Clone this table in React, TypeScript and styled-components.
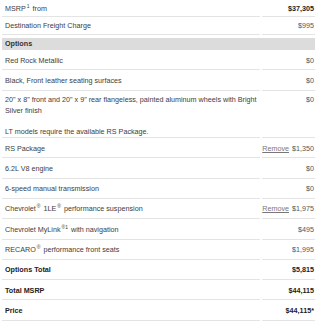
import React from "react";
import styled, { createGlobalStyle } from "styled-components";

const Global = createGlobalStyle`
  html, body { margin: 0; padding: 0; background: #fff; }
  body { font-family: "Liberation Sans", Arial, sans-serif; }
`;

const Table = styled.div`
  width: 313px;
  margin-left: 2px;
  font-size: 7.2px;
  line-height: 11px;
  color: #3d3d3d;
`;

const Row = styled.div<{ $pt?: number; $pb?: number; $noLine?: boolean }>`
  display: grid;
  grid-template-columns: 1fr 53px;
  column-gap: 2px;
  & > div {
    padding-top: ${(p) => (p.$pt ?? 4.5)}px;
    padding-bottom: ${(p) => (p.$pb ?? 3.8)}px;
    border-bottom: 1px solid ${(p) => (p.$noLine ? "transparent" : "#e4e4e4")};
  }
`;

const Desc = styled.div<{ $bold?: boolean }>`
  padding-left: 3px;
  font-weight: ${(p) => (p.$bold ? 700 : 400)};
  color: ${(p) => (p.$bold ? "#222" : "#3d3d3d")};
`;

const Price = styled.div<{ $bold?: boolean }>`
  text-align: right;
  padding-right: 1px;
  white-space: nowrap;
  font-weight: ${(p) => (p.$bold ? 700 : 400)};
  color: ${(p) => (p.$bold ? "#222" : "#555")};
`;

const Header = styled.div`
  margin-top: 3px;
  height: 12px;
  line-height: 12px;
  background: #dcdcdc;
  padding-left: 3px;
  font-weight: 700;
  color: #333;
`;

const Remove = styled.a`
  color: #777;
  text-decoration: underline;
  margin-right: 3px;
  cursor: pointer;
`;

const Sup = styled.sup`
  font-size: 5px;
  line-height: 0;
  vertical-align: 3px;
  margin: 0 1px;
`;

type Item = { d: React.ReactNode; p: React.ReactNode; remove?: boolean };

const options: Item[] = [
  { d: "Red Rock Metallic", p: "$0" },
  { d: "Black, Front leather seating surfaces", p: "$0" },
];

const options2: Item[] = [
  { d: "RS Package", p: "$1,350", remove: true },
  { d: "6.2L V8 engine", p: "$0" },
  { d: "6-speed manual transmission", p: "$0" },
  {
    d: (
      <>
        Chevrolet<Sup>®</Sup> 1LE<Sup>®</Sup> performance suspension
      </>
    ),
    p: "$1,975",
    remove: true,
  },
  {
    d: (
      <>
        Chevrolet MyLink<Sup>®1</Sup> with navigation
      </>
    ),
    p: "$495",
  },
  {
    d: (
      <>
        RECARO<Sup>®</Sup> performance front seats
      </>
    ),
    p: "$1,995",
  },
];

const totals: Item[] = [
  { d: "Options Total", p: "$5,815" },
  { d: "Total MSRP", p: "$44,115" },
  { d: "Price", p: "$44,115*" },
];

function ItemRow({ item }: { item: Item }) {
  return (
    <Row>
      <Desc>{item.d}</Desc>
      <Price>
        {item.remove && <Remove>Remove</Remove>}
        {item.p}
      </Price>
    </Row>
  );
}

export default function App() {
  return (
    <>
      <Global />
      <Table>
        <Row $pt={3} $pb={2}>
          <Desc>
            MSRP<Sup>1</Sup> from
          </Desc>
          <Price $bold>$37,305</Price>
        </Row>
        <Row $pt={3} $pb={3}>
          <Desc>Destination Freight Charge</Desc>
          <Price>$995</Price>
        </Row>
        <Header>Options</Header>
        {options.map((it, i) => (
          <ItemRow key={i} item={it} />
        ))}
        <Row $pt={3.5} $pb={0} $noLine>
          <Desc>
            20" x 8" front and 20" x 9" rear flangeless, painted aluminum wheels with Bright Silver finish
          </Desc>
          <Price>$0</Price>
        </Row>
        <Row $pt={9} $pb={0}>
          <Desc>LT models require the available RS Package.</Desc>
          <Price />
        </Row>
        {options2.map((it, i) => (
          <ItemRow key={i} item={it} />
        ))}
        {totals.map((it, i) => (
          <Row key={i}>
            <Desc $bold>{it.d}</Desc>
            <Price $bold>{it.p}</Price>
          </Row>
        ))}
      </Table>
    </>
  );
}
